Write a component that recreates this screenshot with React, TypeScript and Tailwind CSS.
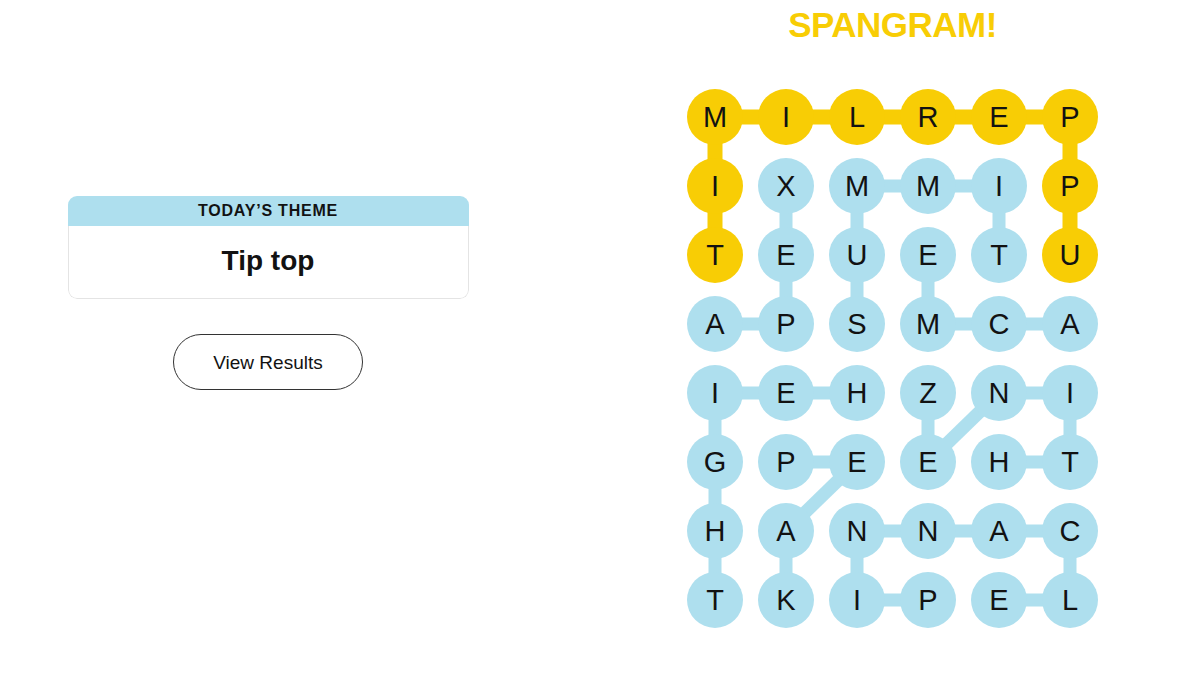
import React from "react";

const FONT = { fontFamily: '"Liberation Sans", Arial, sans-serif' };

const GRID = [
  "MILREP",
  "IXMMIP",
  "TEUETU",
  "APSMCA",
  "IEHZNI",
  "GPEEHT",
  "HANNAC",
  "TKIPEL",
];

// cells that belong to the spangram
const SPANGRAM_CELLS = ["0,0", "0,1", "0,2", "0,3", "0,4", "0,5", "1,0", "2,0", "1,5", "2,5"];

// [r1, c1, r2, c2]
const YELLOW_LINKS = [
  [0, 0, 0, 1], [0, 1, 0, 2], [0, 2, 0, 3], [0, 3, 0, 4], [0, 4, 0, 5],
  [0, 0, 1, 0], [1, 0, 2, 0], [0, 5, 1, 5], [1, 5, 2, 5],
];

const BLUE_LINKS = [
  [1, 1, 2, 1], [2, 1, 3, 1], [3, 0, 3, 1],
  [1, 2, 1, 3], [1, 3, 1, 4], [1, 2, 2, 2], [2, 2, 3, 2], [1, 4, 2, 4],
  [2, 3, 3, 3], [3, 3, 3, 4], [3, 4, 3, 5],
  [4, 0, 4, 1], [4, 1, 4, 2], [4, 0, 5, 0], [5, 0, 6, 0], [6, 0, 7, 0],
  [4, 3, 5, 3], [5, 3, 4, 4], [4, 4, 4, 5], [4, 5, 5, 5], [5, 4, 5, 5],
  [5, 1, 5, 2], [5, 2, 6, 1], [6, 1, 7, 1],
  [6, 2, 6, 3], [6, 3, 6, 4], [6, 4, 6, 5], [6, 2, 7, 2], [7, 2, 7, 3],
  [6, 5, 7, 5], [7, 4, 7, 5],
];

const cx = (c: number) => 28 + c * 71;
const cy = (r: number) => 28 + r * 69;

function Board() {
  return (
    <div className="relative w-[411px] h-[539px]">
      <svg className="absolute inset-0" width="411" height="539" viewBox="0 0 411 539">
        {BLUE_LINKS.map(([r1, c1, r2, c2], i) => (
          <line key={"b" + i} x1={cx(c1)} y1={cy(r1)} x2={cx(c2)} y2={cy(r2)} stroke="#aedfee" strokeWidth="13" />
        ))}
        {YELLOW_LINKS.map(([r1, c1, r2, c2], i) => (
          <line key={"y" + i} x1={cx(c1)} y1={cy(r1)} x2={cx(c2)} y2={cy(r2)} stroke="#f8cd05" strokeWidth="15" />
        ))}
      </svg>
      <div className="relative grid grid-cols-[repeat(6,56px)] gap-x-[15px] gap-y-[13px]">
        {GRID.map((row, r) =>
          row.split("").map((ch, c) => (
            <div
              key={r + "-" + c}
              className={
                "flex h-[56px] w-[56px] items-center justify-center rounded-full text-[29px] leading-none text-[#121212] " +
                (SPANGRAM_CELLS.includes(r + "," + c) ? "bg-[#f8cd05]" : "bg-[#aedfee]")
              }
            >
              {ch}
            </div>
          ))
        )}
      </div>
    </div>
  );
}

export default function App() {
  return (
    <div className="flex h-[675px] w-[1200px] bg-white text-[#121212]" style={FONT}>

      {/* Theme + results */}
      <div className="flex w-[536px] shrink-0 flex-col items-center pt-[196px]">
        <div className="w-[401px] overflow-hidden rounded-[9px]">
          <div className="flex h-[30px] items-center justify-center bg-[#aedfee] text-[16px] font-bold uppercase tracking-[0.8px] text-[#121212]">
            Today’s Theme
          </div>
          <div className="flex h-[73px] items-center justify-center rounded-b-[9px] border border-t-0 border-[#e4e4e4] pb-[2px] text-[28px] font-bold">
            Tip top
          </div>
        </div>
        <button className="mt-[35px] h-[56px] w-[190px] rounded-full border border-[#333] pt-[2px] text-[19px] text-[#121212]">
          View Results
        </button>
      </div>

      {/* Board */}
      <div className="ml-[151px] flex w-[411px] shrink-0 flex-col items-center">
        <h2 className="mt-[7px] text-[35px] font-bold leading-[35px] tracking-[-0.5px] text-[#f8cd05]">SPANGRAM!</h2>
        <div className="mt-[47px]">
          <Board />
        </div>
      </div>

    </div>
  );
}
